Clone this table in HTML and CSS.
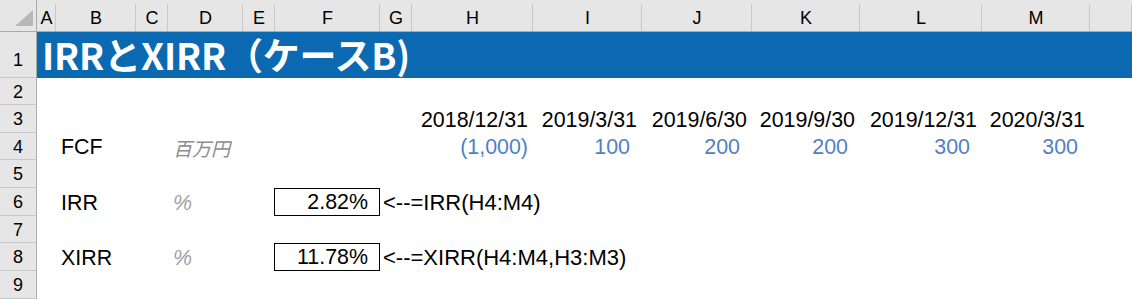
FILE: index.html
```html
<!DOCTYPE html>
<html lang="ja">
<head>
<meta charset="utf-8">
<title>IRRとXIRR（ケースB)</title>
<link rel="stylesheet" href="styles.css">
</head>
<body>
<div class="sheet">
  <div class="row colhead">
    <div class="corner"><svg width="22" height="20" viewBox="0 0 22 20"><polygon points="21,2 21,18 3,18" fill="#b7b7b7"/></svg></div>
    <div class="ch">A</div><div class="ch">B</div><div class="ch">C</div><div class="ch">D</div><div class="ch">E</div><div class="ch">F</div><div class="ch">G</div><div class="ch">H</div><div class="ch">I</div><div class="ch">J</div><div class="ch">K</div><div class="ch">L</div><div class="ch">M</div><div class="ch"></div>
  </div>
  <div class="row r-title">
    <div class="rh rh-title">1</div>
    <div class="title">IRRとXIRR（ケースB)</div>
  </div>
  <div class="row r-std">
    <div class="rh">2</div>
  </div>
  <div class="row r-big">
    <div class="rh">3</div>
    <div class="c c-b"></div>
    <div class="c date c-h">2018/12/31</div>
    <div class="c date">2019/3/31</div>
    <div class="c date">2019/6/30</div>
    <div class="c date">2019/9/30</div>
    <div class="c date">2019/12/31</div>
    <div class="c date">2020/3/31</div>
  </div>
  <div class="row r-std">
    <div class="rh">4</div>
    <div class="c c-b label">FCF</div>
    <div class="c c-d unit">百万円</div>
    <div class="c num neg c-h">(1,000)</div>
    <div class="c num">100</div>
    <div class="c num">200</div>
    <div class="c num">200</div>
    <div class="c num">300</div>
    <div class="c num">300</div>
  </div>
  <div class="row r-big">
    <div class="rh">5</div>
  </div>
  <div class="row r-big">
    <div class="rh">6</div>
    <div class="c c-b label">IRR</div>
    <div class="c c-d pct">%</div>
    <div class="c c-f result">2.82%</div>
    <div class="c c-g formula">&lt;--=IRR(H4:M4)</div>
  </div>
  <div class="row r-std">
    <div class="rh">7</div>
  </div>
  <div class="row r-big">
    <div class="rh">8</div>
    <div class="c c-b label">XIRR</div>
    <div class="c c-d pct">%</div>
    <div class="c c-f result">11.78%</div>
    <div class="c c-g formula">&lt;--=XIRR(H4:M4,H3:M3)</div>
  </div>
  <div class="row r-big">
    <div class="rh">9</div>
  </div>
</div>
</body>
</html>
```
FILE: styles.css
```css
html, body {
  margin: 0;
  padding: 0;
  background: #ffffff;
  overflow: hidden;
}

.sheet {
  width: 1132px;
  height: 299px;
  font-family: "Liberation Sans", Arial, sans-serif;
  color: #000;
}

.row {
  display: grid;
  grid-template-columns: 37px 19px 80px 32px 75px 32px 105px 32px 121px 109px 110px 108px 122px 108px 1fr;
}

.colhead {
  height: 31px;
  border-bottom: 1px solid #ababab;
  background: #e6e6e6;
}

.corner {
  display: flex;
  align-items: flex-end;
  justify-content: flex-end;
  padding: 0 2px 3px 0;
  border-right: 1px solid #ababab;
  box-sizing: border-box;
}

.ch {
  display: flex;
  align-items: flex-end;
  justify-content: center;
  font-size: 18px;
  line-height: 21px;
  padding-bottom: 2px;
  box-sizing: border-box;
  background: linear-gradient(#c8c8c8, #c8c8c8) right 4px / 1px calc(100% - 4px) no-repeat, #e6e6e6;
}

.r-title { height: 46px; }
.r-std { height: 27px; }
.r-big { height: 28px; }

.rh {
  grid-column: 1;
  display: flex;
  align-items: center;
  justify-content: center;
  background: #e6e6e6;
  border-right: 1px solid #ababab;
  border-bottom: 1px solid #c8c8c8;
  box-sizing: border-box;
  font-size: 18px;
  padding-top: 2px;
}

.rh-title {
  align-items: flex-end;
  padding: 0 0 6px 0;
}

.title {
  grid-column: 2 / -1;
  background: #0a69b0;
  color: #ffffff;
  font-family: "Noto Sans CJK JP", "Liberation Sans", sans-serif;
  font-weight: 700;
  font-size: 37px;
  line-height: 44px;
  padding-left: 5px;
  white-space: nowrap;
  letter-spacing: -0.2px;
}

.c {
  display: flex;
  align-items: flex-end;
  font-size: 21.4px;
  line-height: 24px;
  white-space: nowrap;
  box-sizing: border-box;
  padding-bottom: 1px;
}

.c-b { grid-column: 3; }
.c-d { grid-column: 5; }
.c-f { grid-column: 7; }
.c-g { grid-column: 8; }
.c-h { grid-column: 9; }

.label { padding-left: 5px; }

.date {
  justify-content: flex-end;
  padding-right: 5px;
}

.num {
  justify-content: flex-end;
  padding-right: 12px;
  color: #4f81c6;
}

.num.neg { padding-right: 5px; }

.unit {
  padding-left: 5px;
  color: #8c8c8c;
  font-family: "Noto Sans CJK JP", sans-serif;
  font-style: italic;
  font-size: 19px;
  line-height: 24px;
  padding-bottom: 0;
}

.pct {
  padding-left: 5px;
  color: #a0a0a0;
  font-style: italic;
}

.result {
  justify-content: flex-end;
  border: 1px solid #000;
  padding-right: 11px;
  margin-left: -1px;
}

.formula {
  padding-left: 3px;
  font-size: 22px;
  overflow: visible;
}
```
